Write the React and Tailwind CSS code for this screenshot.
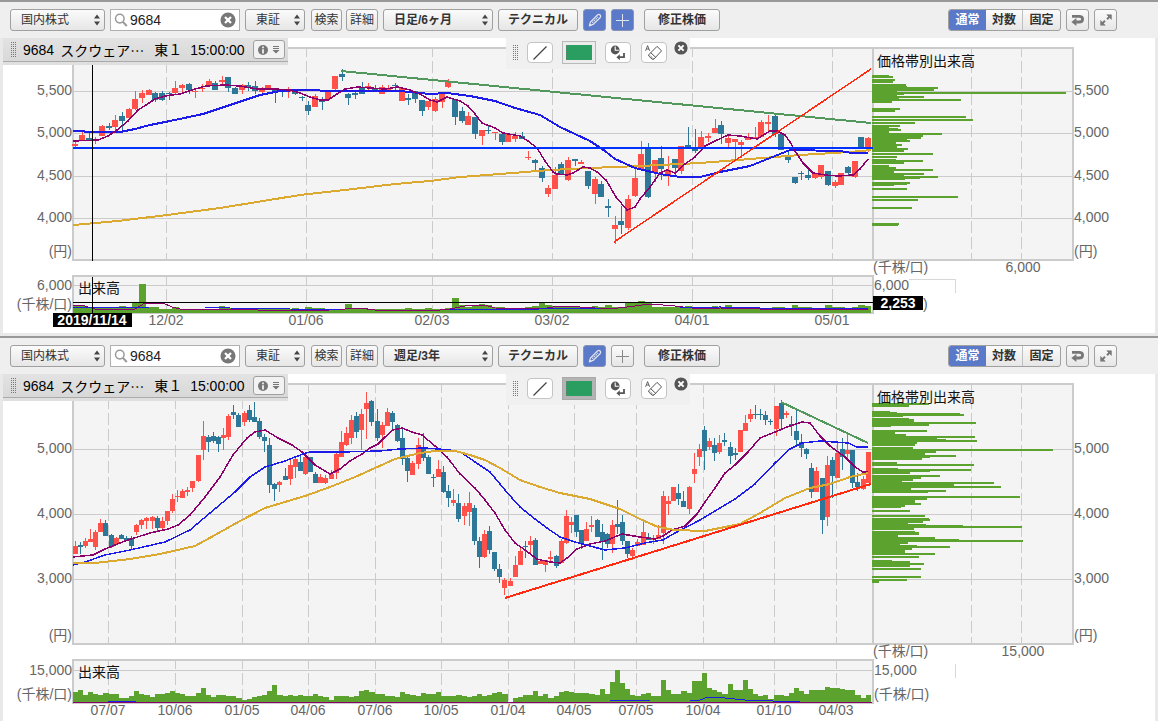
import React from "react";

// Each candle: direction (R rising / B falling), high, body top, body bottom, low.
const DAILY = `R 141 144 146 147|R 132 135 141 141|B 133 138 141 141|R 137 140 141 144|R 125 126 136 136|B 123 126 128 130|R 115 120 127 130|B 112 116 121 131|R 108 109 118 118|R 91 99 109 110|R 90 93 98 103|R 89 90 95 95|B 92 93 100 102|B 91 93 100 101|B 92 93 94 100|R 81 88 93 94|R 84 85 88 93|B 83 84 90 94|R 88 91 92 98|R 84 88 89 92|R 79 81 86 86|B 81 83 90 90|R 76 80 82 85|B 77 77 88 92|B 87 88 94 94|R 84 85 90 94|B 82 85 87 91|B 81 86 91 94|R 87 89 92 94|R 85 85 88 88|B 90 90 93 103|B 90 91 92 97|R 87 89 92 98|B 90 90 94 95|B 96 97 98 101|B 101 105 111 115|R 94 96 107 107|B 97 100 102 110|R 91 91 99 99|R 76 76 89 92|B 69 74 77 81|B 93 94 98 105|B 91 93 95 99|B 82 88 94 94|R 83 86 87 91|B 85 88 92 92|R 85 87 94 94|R 85 88 92 92|B 83 85 86 90|R 88 88 101 101|B 94 98 100 105|B 91 91 99 103|B 100 100 111 116|R 101 101 107 110|R 97 99 111 112|R 92 92 102 108|R 79 82 87 88|B 99 99 117 125|B 107 111 121 123|R 112 116 125 125|B 117 117 134 139|R 130 130 136 145|B 126 130 131 134|R 132 132 133 140|B 134 134 142 145|R 134 134 142 142|R 132 136 139 142|B 132 136 139 139|R 151 157 158 160|B 159 160 163 171|B 166 168 178 182|R 185 188 194 197|R 167 175 189 189|B 162 164 175 175|R 157 160 180 181|B 159 159 161 166|R 160 162 164 164|B 171 171 186 189|R 177 179 194 204|B 181 184 197 197|B 199 206 208 217|R 216 225 229 244|B 206 221 225 234|R 195 199 228 230|R 167 178 196 197|R 141 154 169 169|B 143 148 197 198|R 160 160 172 182|B 146 158 169 180|R 156 170 175 186|B 159 159 168 175|R 146 146 171 174|B 127 145 148 148|B 129 147 151 153|R 131 137 149 149|R 133 136 138 142|R 119 128 133 133|B 121 125 134 144|R 135 138 143 148|R 139 139 142 159|R 140 142 145 158|R 133 138 140 140|R 127 137 139 139|R 120 122 137 137|R 115 122 124 131|B 115 116 134 137|B 134 134 150 150|B 151 155 160 163|B 177 177 183 184|B 171 173 174 180|B 170 175 178 180|R 173 174 178 179|R 165 165 177 179|B 171 171 185 186|R 180 182 186 188|R 173 173 185 185|B 166 167 173 176|R 161 161 177 178|B 137 137 148 148|R 137 138 148 152`;

const WEEKLY = `R 541 546 554 554|B 542 545 547 554|R 538 541 546 548|R 529 539 542 542|R 530 532 547 550|R 519 523 532 532|B 520 523 536 536|B 534 535 547 548|R 537 538 544 544|B 534 535 539 539|B 536 538 541 541|B 536 538 546 549|R 524 525 532 535|R 519 520 525 529|R 517 518 521 529|R 516 517 521 529|B 516 518 528 531|R 517 521 528 530|R 511 511 521 525|R 494 499 511 513|R 490 496 497 502|R 489 491 498 498|R 487 490 492 496|R 481 481 488 492|R 455 455 481 482|R 421 436 450 460|B 435 437 442 452|B 432 436 441 443|B 436 437 444 452|R 428 435 438 450|R 414 416 437 440|B 405 412 415 419|B 413 415 427 427|R 411 413 422 426|B 405 410 420 422|B 402 417 422 422|B 418 421 437 439|B 434 437 441 452|B 438 445 485 493|B 483 484 489 501|R 481 482 485 492|B 468 476 480 480|R 460 465 479 485|R 457 459 467 478|B 456 462 471 471|R 456 457 474 475|B 457 457 472 472|B 472 474 483 483|R 474 477 483 483|R 475 478 483 484|R 470 474 479 479|R 452 454 473 479|R 431 442 457 457|R 427 433 445 446|R 415 420 438 444|B 412 416 432 438|R 409 414 430 450|R 392 403 409 439|B 400 401 422 426|B 409 421 438 441|R 422 425 435 448|R 408 412 426 426|B 411 413 422 429|B 424 425 441 442|B 429 438 459 465|B 457 458 471 482|R 461 463 475 475|R 438 445 464 469|B 433 448 458 461|B 455 457 474 474|B 474 477 478 487|R 460 469 477 477|B 466 472 492 493|B 485 491 498 507|R 489 500 503 506|B 494 503 519 522|R 503 506 516 525|R 492 503 512 526|B 505 508 541 545|B 537 541 557 568|R 530 534 557 558|B 526 531 550 554|B 552 552 569 571|B 564 569 577 583|R 578 580 588 595|R 578 581 586 586|R 556 565 577 577|R 548 551 565 565|B 541 546 547 558|R 536 541 545 554|B 538 540 565 565|R 559 561 564 564|R 560 560 565 572|R 551 557 559 563|B 555 556 566 568|R 539 541 563 563|R 510 516 543 544|R 517 522 525 533|B 515 515 532 537|B 530 530 543 549|R 522 529 541 541|R 516 525 527 532|B 519 520 537 537|B 524 532 542 560|B 533 534 544 548|R 520 525 544 553|B 500 524 527 534|B 515 522 541 545|B 541 541 554 558|R 548 550 556 560|R 539 542 546 546|R 522 532 545 545|B 533 537 540 540|R 535 538 540 544|R 525 535 539 539|R 491 496 533 544|R 496 501 504 515|R 487 487 501 501|B 484 493 499 505|B 491 501 507 507|R 486 487 509 514|R 453 469 474 483|R 444 449 457 466|B 426 430 451 470|R 438 441 447 450|B 438 445 453 461|R 435 443 452 454|B 433 440 442 446|B 442 447 456 464|B 448 453 455 460|R 430 430 452 452|R 415 423 431 431|R 409 414 419 422|B 405 414 415 419|B 409 414 415 420|B 411 415 420 425|B 419 421 422 425|R 406 406 429 436|B 400 403 419 428|R 411 413 415 418|B 416 424 426 436|B 410 431 440 445|B 434 442 448 457|B 448 449 454 459|B 463 468 492 498|R 467 471 492 492|B 478 478 520 534|R 456 465 517 526|B 457 460 476 498|R 443 453 478 478|B 438 449 457 470|R 434 450 454 459|B 450 450 483 488|B 473 482 487 491|R 476 479 489 490|R 452 452 483 483`;

const parseCandles = (text) =>
  text.split("|").map((row) => {
    const [dir, high, top, bottom, low] = row.split(" ");
    return { up: dir === "R", high: +high, top: +top, bottom: +bottom, low: +low };
  });

// Volume by price: top, height, length.
const DAILY_PROFILE = [
  [75, 1, 17], [76, 2, 21], [79, 2, 23], [81, 2, 21], [84, 2, 34], [86, 1, 35], [87, 2, 66], [89, 2, 62], [91, 1, 25],
  [92, 2, 194], [94, 1, 32], [95, 1, 25], [96, 2, 52], [98, 1, 27], [99, 2, 89], [101, 2, 20], [108, 2, 28], [110, 2, 23],
  [116, 2, 94], [119, 2, 101], [122, 2, 43], [125, 2, 28], [127, 1, 17], [128, 1, 26], [129, 2, 29], [131, 2, 17],
  [133, 2, 70], [135, 2, 51], [137, 2, 49], [139, 1, 35], [140, 2, 38], [142, 2, 24], [144, 2, 30], [146, 2, 25],
  [148, 2, 36], [150, 2, 32], [153, 2, 61], [156, 2, 25], [159, 1, 24], [160, 2, 51], [162, 2, 32], [165, 2, 17],
  [167, 2, 24], [169, 2, 61], [171, 2, 22], [173, 2, 52], [175, 1, 32], [176, 2, 66], [178, 1, 48], [179, 1, 33],
  [182, 2, 38], [184, 1, 35], [185, 1, 22], [188, 2, 35], [196, 2, 86], [199, 2, 46], [207, 2, 40], [223, 2, 27], [225, 1, 26],
];
const WEEKLY_PROFILE = [
  [403, 2, 57], [405, 2, 37], [411, 1, 18], [412, 1, 25], [413, 1, 88], [414, 2, 92], [416, 1, 31], [418, 1, 37],
  [419, 3, 42], [422, 2, 104], [424, 2, 57], [426, 1, 19], [430, 2, 55], [432, 2, 23], [434, 2, 34], [436, 2, 103],
  [438, 1, 65], [439, 1, 74], [440, 2, 105], [442, 2, 45], [444, 2, 43], [447, 2, 41], [449, 2, 181], [451, 2, 64],
  [453, 2, 53], [455, 2, 84], [457, 1, 58], [458, 2, 50], [462, 2, 25], [464, 2, 102], [468, 1, 26], [469, 2, 99],
  [471, 1, 58], [472, 2, 38], [475, 2, 68], [477, 2, 49], [479, 2, 41], [481, 1, 30], [482, 2, 122], [484, 2, 82],
  [486, 2, 129], [488, 2, 39], [490, 2, 74], [492, 1, 56], [496, 2, 148], [498, 2, 55], [500, 3, 43], [503, 2, 49],
  [505, 2, 33], [507, 1, 29], [510, 2, 38], [515, 2, 53], [518, 1, 57], [519, 2, 58], [521, 2, 51], [523, 1, 36],
  [524, 1, 54], [525, 1, 91], [526, 2, 150], [528, 2, 42], [531, 1, 43], [532, 3, 47], [535, 2, 26], [537, 2, 63],
  [539, 1, 87], [540, 2, 151], [542, 2, 36], [544, 1, 28], [545, 1, 45], [546, 2, 78], [548, 2, 40], [550, 3, 33],
  [553, 2, 63], [556, 2, 47], [560, 1, 20], [561, 2, 38], [563, 2, 52], [565, 2, 38], [568, 2, 49], [576, 2, 49],
  [579, 2, 35], [581, 2, 7],
];

const DAILY_VOLUME = [
  6, 6, 5, 4, 4, 4, 5, 6, 4, 9, 28, 5, 5, 3, 3, 5, 3, 3, 3, 3, 3, 3, 6, 4, 3, 4, 4, 3, 3, 3, 3, 3, 3, 4, 3, 5, 4, 4, 3, 3,
  3, 8, 4, 3, 3, 3, 3, 3, 3, 3, 4, 3, 3, 4, 3, 3, 4, 14, 7, 5, 6, 8, 7, 5, 5, 3, 3, 3, 5, 6, 9, 7, 6, 6, 6, 6, 5, 5, 6, 5,
  7, 5, 5, 9, 9, 11, 9, 5, 5, 5, 5, 5, 6, 5, 5, 5, 6, 5, 7, 5, 5, 5, 5, 4, 4, 5, 5, 4, 7, 5, 5, 4, 4, 7, 5, 5, 4, 5, 7, 6,
];
const WEEKLY_VOLUME = [
  10, 12, 7, 10, 8, 7, 9, 8, 8, 4, 4, 6, 11, 8, 7, 5, 8, 8, 9, 11, 9, 8, 6, 6, 9, 14, 7, 5, 7, 7, 6, 6, 4, 2, 3, 5, 6, 7, 11,
  17, 7, 6, 7, 6, 7, 6, 6, 8, 6, 5, 2, 6, 6, 6, 5, 6, 11, 12, 10, 8, 8, 6, 6, 5, 10, 8, 7, 6, 9, 8, 8, 10, 6, 6, 6, 7, 6, 5,
  6, 8, 6, 7, 9, 10, 8, 0, 4, 5, 7, 7, 11, 6, 8, 4, 6, 10, 11, 10, 9, 9, 9, 8, 7, 13, 8, 20, 32, 19, 13, 7, 6, 8, 9, 6, 6,
  22, 12, 8, 8, 11, 9, 21, 21, 29, 14, 12, 10, 8, 18, 12, 12, 22, 13, 8, 6, 7, 3, 7, 7, 6, 9, 14, 11, 8, 12, 12, 12, 15, 14,
  14, 13, 12, 12, 7, 4, 7,
];

const dailyChart = {
  title: "日足チャート",
  viewBox: "3 38 1152 295",
  top: 48,
  bottom: 260,
  volTop: 276,
  volBottom: 313,
  candles: parseCandles(DAILY),
  start: 75.8,
  step: 6.66,
  bodyWidth: 6,
  bodyOffset: 3,
  volume: DAILY_VOLUME,
  profile: DAILY_PROFILE,
  prices: [[91, "5,500"], [133, "5,000"], [176, "4,500"], [218, "4,000"]],
  dates: [[166, "12/02"], [306, "01/06"], [432, "02/03"], [552, "03/02"], [692, "04/01"], [832, "05/01"]],
  volLabel: "6,000",
  volGrid: 285,
  dateBaseline: 325,
  unitBaseline: 309,
  lines: [
    ["#dba830", 2, "73,225 118,221 167,215 220,208 300,195 345,190 395,184 430,181 460,177 500,174 550,170 590,168 640,166 700,163 750,159 800,155 850,152 871,150"],
    ["#1c1ce6", 2, "73,131 83,131 86,132 120,132 135,129 150,125 170,121 203,114 230,105 260,95 280,91 300,90 340,91 400,91 430,94 447,93 470,96 495,101 515,108 540,115 560,127 575,134 590,141 605,151 615,159 635,168 660,174 680,177 700,177 720,172 750,166 765,160 780,154 790,150 840,151 852,153 868,153"],
    ["#8b006b", 1.5, "73,141 98,140 108,136 117,130 128,121 138,110 146,105 155,99 165,96 180,94 195,89 206,86 225,85 240,86 257,89 275,89 290,90 300,93 310,97 320,100 328,100 337,94 345,89 358,87 370,88 385,89 398,87 410,90 420,94 430,100 437,102 447,97 460,101 468,106 475,114 482,123 495,128 503,133 520,136 528,141 537,148 545,161 553,172 557,174 567,175 573,173 583,167 590,168 597,172 606,180 616,197 627,210 635,207 640,199 650,187 660,173 667,170 675,173 685,164 695,157 705,146 715,141 728,135 740,136 757,139 770,131 777,131 785,135 790,142 795,151 803,163 813,173 825,175 838,176 853,175 860,169 868,159"],
    ["#0032ff", 2, "73,148 873,148"],
    ["#52985c", 2, "341,71 871,123"],
    ["#ff2a10", 1.5, "614,242 871,69"],
  ],
  volLines: [
    ["#8b006b", "73,305 85,306 95,309 135,309 145,303 163,303 172,307 180,309 225,309 290,311 330,310 360,308 375,310 440,310 450,309 465,306 485,305 495,308 540,309 560,306 580,307 610,309 635,306 650,304 675,306 700,309 720,308 760,309 868,309"],
    ["#1c1ce6", "73,307 95,308 150,307 205,307 230,308 290,309 340,310 450,310 540,309 600,308 680,308 720,307 760,308 868,308"],
  ],
  cursor: true,
};

const weeklyChart = {
  title: "週足チャート",
  viewBox: "3 374 1152 347",
  top: 384,
  bottom: 644,
  volTop: 660,
  volBottom: 703,
  candles: parseCandles(WEEKLY),
  start: 75.3,
  step: 5.115,
  bodyWidth: 5,
  bodyOffset: 2,
  volume: WEEKLY_VOLUME,
  profile: WEEKLY_PROFILE,
  prices: [[449, "5,000"], [514, "4,000"], [579, "3,000"]],
  dates: [
    [108, "07/07"], [175, "10/06"], [242, "01/05"], [308, "04/06"], [375, "07/06"], [441, "10/05"],
    [508, "01/04"], [574, "04/05"], [636, "07/05"], [703, "10/04"], [774, "01/10"], [836, "04/03"],
  ],
  volLabel: "15,000",
  volGrid: 670,
  dateBaseline: 715,
  unitBaseline: 699,
  lines: [
    ["#8b006b", 1.5, "73,557 93,555 105,549 125,541 150,533 168,529 178,525 190,515 205,497 220,477 233,455 247,438 255,432 265,430 278,438 292,445 302,452 315,465 330,474 340,469 350,461 362,454 370,448 378,444 385,437 393,430 402,428 412,432 422,435 435,446 447,457 460,474 475,488 485,500 495,513 505,530 515,543 525,550 537,559 550,562 560,563 567,558 577,549 590,544 605,541 622,534 640,537 655,539 663,536 672,530 685,526 697,514 705,502 715,488 725,473 735,465 748,452 760,438 775,432 787,427 802,422 810,423 820,436 830,446 845,457 855,467 863,472 868,472"],
    ["#1c1ce6", 1.5, "73,565 85,562 105,555 130,550 165,542 190,530 210,513 235,492 250,477 265,467 285,461 303,454 310,452 340,452 380,451 400,449 425,448 450,450 462,453 475,462 490,472 505,490 520,507 535,519 547,528 560,537 575,542 590,546 605,550 625,548 645,543 663,540 675,533 700,520 735,499 755,484 775,463 790,449 802,443 820,441 848,443 857,447 868,447"],
    ["#dba830", 2, "73,563 95,563 130,559 160,554 195,546 215,535 240,521 265,508 285,502 305,496 330,487 355,477 375,468 395,459 420,453 435,451 455,451 470,455 485,460 500,468 520,480 540,487 560,493 590,499 605,504 620,509 640,519 658,527 675,530 705,531 740,524 760,513 785,498 810,488 830,484 850,477 868,473"],
    ["#ff2a10", 2, "505,598 871,484"],
    ["#52985c", 2, "781,402 868,443"],
  ],
  volLines: [
    ["#8b006b", "73,702 872,702"],
    ["#1c1ce6", "108,701 136,701"],
    ["#1c1ce6", "610,701 632,700 650,701"],
    ["#1c1ce6", "690,701 700,700 708,697 725,698 745,700 773,701 800,701"],
  ],
  cursor: false,
};

const FRAME = "#cbcbcb";

function VerticalGrid({ x, y1, y2 }) {
  return <line x1={x + 0.5} x2={x + 0.5} y1={y1} y2={y2} stroke={FRAME} strokeDasharray="12 4" strokeDashoffset="3" />;
}

function StockChart({ data }) {
  const profileUnitBaseline = data.bottom + 12;
  return (
    <svg viewBox={data.viewBox} className="block h-auto w-full bg-white" role="img" aria-label={data.title}>
      <g shapeRendering="crispEdges" fill="none">
        <rect x="73" y={data.top} width="1000" height={data.bottom - data.top} fill="#f4f4f4" />
        <rect x="73" y={data.volTop} width="800" height={data.volBottom - data.volTop} fill="#f4f4f4" />
        {data.prices.map(([y]) => (
          <line key={y} x1="73" x2="1072" y1={y + 0.5} y2={y + 0.5} stroke={FRAME} />
        ))}
        <line x1="73" x2="873" y1={data.volGrid + 0.5} y2={data.volGrid + 0.5} stroke={FRAME} />
        {data.dates.map(([x]) => (
          <g key={x}>
            <VerticalGrid x={x} y1={data.top} y2={data.bottom} />
            <VerticalGrid x={x} y1={data.volTop} y2={data.volBottom} />
          </g>
        ))}
        <VerticalGrid x={971} y1={data.top} y2={data.bottom} />
        <VerticalGrid x={1021} y1={data.top} y2={data.bottom} />
        <rect x="73" y={data.top} width="1000" height={data.bottom - data.top} stroke={FRAME} strokeWidth="2" />
        <rect x="73" y={data.volTop} width="800" height={data.volBottom - data.volTop} stroke={FRAME} strokeWidth="2" />
        <line x1="873" x2="873" y1={data.top} y2={data.bottom} stroke={FRAME} strokeWidth="2" />

        {data.candles.map((c, i) => {
          const x = Math.floor(data.start + data.step * i);
          return (
            <g key={i} fill={c.up ? "#ff5049" : "#2d7898"}>
              <rect x={x} y={c.high} width="1" height={c.low - c.high} />
              <rect x={x - data.bodyOffset} y={c.top} width={data.bodyWidth} height={c.bottom - c.top} />
            </g>
          );
        })}
        {data.volume.map((h, i) => {
          const x = Math.floor(data.start + data.step * i) - data.bodyOffset;
          const next = Math.floor(data.start + data.step * (i + 1)) - data.bodyOffset;
          const left = Math.max(x, 73);
          return <rect key={i} x={left} y={data.volBottom - h - 1} width={Math.min(next, 871) - left} height={h + 1} fill="#5ca22e" />;
        })}
        {data.profile.map(([y, h, w]) => (
          <rect key={y} x="872" y={y} width={w} height={h} fill="#5ca22e" />
        ))}
        {data.lines.map(([color, width, points], i) => (
          <polyline key={i} points={points} stroke={color} strokeWidth={width} />
        ))}
        {data.volLines.map(([color, points], i) => (
          <polyline key={i} points={points} stroke={color} strokeWidth="1" />
        ))}
        {data.cursor ? (
          <polyline points="909,279.5 955.5,279.5 955.5,293" stroke="#d8d8d8" />
        ) : (
          <line x1="955.5" x2="955.5" y1="664" y2="678" stroke="#d8d8d8" />
        )}
        {data.cursor && (
          <g stroke="#000">
            <line x1="92.5" x2="92.5" y1={data.top} y2={data.bottom + 1} />
            <line x1="92.5" x2="92.5" y1={data.volTop + 1} y2={data.volBottom} />
            <line x1="73" x2="873" y1="302.5" y2="302.5" />
          </g>
        )}
      </g>

      <g fill="#666" fontSize="14">
        {data.prices.map(([y, label]) => (
          <g key={label}>
            <text x="72" y={y + 4} textAnchor="end">{label}</text>
            <text x="1074" y={y + 4}>{label}</text>
          </g>
        ))}
        <text x="72" y={data.bottom - 4} textAnchor="end">(円)</text>
        <text x="1074" y={data.bottom - 4}>(円)</text>
        <text x="72" y={data.volGrid + 5} textAnchor="end">{data.volLabel}</text>
        <text x="874" y={data.volGrid + 5}>{data.volLabel}</text>
        <text x="72" y={data.unitBaseline} textAnchor="end">(千株/口)</text>
        {data.cursor ? (
          <text x="923" y={data.unitBaseline}>)</text>
        ) : (
          <text x="874" y={data.unitBaseline}>(千株/口)</text>
        )}
        <text x="873" y={profileUnitBaseline}>(千株/口)</text>
        <text x="1023" y={profileUnitBaseline} textAnchor="middle">{data.volLabel}</text>
        {data.dates.map(([x, label]) => (
          <text key={x} x={x} y={data.dateBaseline} textAnchor="middle">{label}</text>
        ))}
      </g>
      <g fill="#111" fontSize="14">
        <text x="877" y={data.top + 18}>価格帯別出来高</text>
        <text x="78" y={data.volTop + 17}>出来高</text>
      </g>
      {data.cursor && (
        <g fontSize="14" fontWeight="bold" textAnchor="middle">
          <rect x="53" y="313" width="79" height="14" />
          <text x="92" y="325" fill="#fff">2019/11/14</text>
          <rect x="873" y="296" width="50" height="14" />
          <text x="898" y="308" fill="#fff">2,253</text>
        </g>
      )}
    </svg>
  );
}

const control = "h-[22px] rounded-[3px] border border-[#a0a0a0] bg-linear-to-b from-[#fbfbfb] to-[#e6e6e6] text-[12px] leading-5 text-[#333]";

function Picker({ label, value, className, bold }) {
  return (
    <label className={`relative block ${className}`}>
      <span className="sr-only">{label}</span>
      <select
        defaultValue={value}
        className={`${control} block w-full appearance-none pl-[10px] ${bold ? "font-bold" : ""}`}
      >
        <option>{value}</option>
      </select>
      <svg viewBox="0 0 8 12" className="pointer-events-none absolute top-[5px] right-1 h-3 w-2" fill="#444">
        <path d="M4 0.5 7 4.5H1zM4 11.5 7 7.5H1z" />
      </svg>
    </label>
  );
}

function PencilIcon() {
  return (
    <svg viewBox="0 0 14 14" className="size-3.5" fill="none" stroke="#dfe3ee" strokeWidth="1.2">
      <path d="M1.5 12.5 2.4 9 9.4 2Q11 .8 12.1 2T12 4.8L5.2 11.4z" />
      <path d="M4.2 9.8 10 3.9" strokeDasharray="1.6 .8" />
      <path d="m1.5 12.5 1.8-.6" strokeWidth="2" />
    </svg>
  );
}

function CrossIcon({ active }) {
  return (
    <svg viewBox="0 0 13 13" className="size-[13px]" stroke={active ? "#dfe3ee" : "#888"} shapeRendering="crispEdges">
      <path d="M6.5 0v13M0 6.5h13" />
    </svg>
  );
}

function UndoIcon() {
  return (
    <svg viewBox="0 0 15 14" className="h-3.5 w-[15px]" fill="none" stroke="#777" strokeWidth="2.8">
      <path d="M2 3.4H9Q12.6 3.4 12.6 6.2T9 9H5" />
      <path d="M6.4 5V13L1.4 9z" fill="#777" stroke="none" />
    </svg>
  );
}

function ExpandIcon() {
  return (
    <svg viewBox="0 0 14 14" className="size-3.5" fill="#777" stroke="#777" strokeWidth="2">
      <path d="M7.8 1.8h4.6v4.6z" strokeWidth=".6" />
      <path d="M11 3.2 8 6.2" />
      <path d="M1.6 7.6v4.6h4.6z" strokeWidth=".6" />
      <path d="m3 10.8 3-3" />
    </svg>
  );
}

function CloseCircle({ className, fill }) {
  return (
    <svg viewBox="0 0 14 14" className={className}>
      <circle cx="7" cy="7" r="6.6" fill={fill} />
      <path d="m4.4 4.4 5.2 5.2m0-5.2L4.4 9.6" stroke="#fff" strokeWidth="2" />
    </svg>
  );
}

function Grip() {
  return (
    <svg viewBox="0 0 6 15" className="h-[15px] w-1.5 shrink-0" stroke="#777" strokeWidth="1" strokeDasharray="1 1" shapeRendering="crispEdges">
      <path d="M.5 0v15M2.5 0v15M4.5 0v15" />
    </svg>
  );
}

function Toolbar({ period, crossActive }) {
  const square = "flex w-[23px] items-center justify-center";
  const blue = "h-[22px] rounded-[3px] border border-[#8792b4] bg-[#5a79c8]";
  return (
    <div className="flex items-center bg-[#efefef] py-[7px] pr-[41px] pl-[10px]">
      <div className="flex items-center gap-[5px]">
        <Picker label="市場区分" value="国内株式" className="w-[95px]" />
        <label className="flex h-[22px] w-[130px] items-center border border-[#b0b0b0] bg-white px-[3px]">
          <span className="sr-only">銘柄コード</span>
          <svg viewBox="0 0 14 14" className="size-3.5 shrink-0" fill="none" stroke="#999" strokeWidth="1.5">
            <circle cx="5.8" cy="5.6" r="4.3" />
            <path d="m9 9 3.8 4" strokeWidth="2" />
          </svg>
          <input defaultValue="9684" className="ml-0.5 block h-5 w-full min-w-0 text-[14px] leading-5 text-[#222] outline-none" />
          <button type="button" aria-label="クリア" className="shrink-0">
            <CloseCircle className="size-4" fill="#777" />
          </button>
        </label>
        <Picker label="取引所" value="東証" className="w-[60px]" />
      </div>
      <div className="ml-1.5 flex gap-1">
        <button type="button" className={`${control} w-[31px] whitespace-nowrap`}>検索</button>
        <button type="button" className={`${control} w-[32px] whitespace-nowrap`}>詳細</button>
      </div>
      <div className="ml-[5px] flex gap-[5px]">
        <Picker label="足種" value={period} className="w-[110px]" bold />
        <button type="button" className={`${control} w-20 font-bold whitespace-nowrap`}>テクニカル</button>
        <button type="button" aria-label="描画" className={`${square} ${blue}`}>
          <PencilIcon />
        </button>
        <button type="button" aria-label="十字線" className={`${square} ${crossActive ? blue : control}`}>
          <CrossIcon active={crossActive} />
        </button>
      </div>
      <button type="button" className={`${control} ml-2.5 w-[76px] font-bold whitespace-nowrap`}>修正株価</button>
      <div className="ml-auto flex gap-[5px]">
        <div className="flex h-[22px] overflow-hidden rounded-[3px] border border-[#a0a0a0] bg-linear-to-b from-[#fbfbfb] to-[#e6e6e6] text-[12px] leading-5 font-bold whitespace-nowrap text-[#333]">
          <button type="button" className="w-[37px] bg-[#5a79c8] text-white">通常</button>
          <button type="button" className="w-[37px] border-r border-[#c0c0c0]">対数</button>
          <button type="button" className="w-[37px]">固定</button>
        </div>
        <button type="button" aria-label="元に戻す" className={`${control} ${square}`}><UndoIcon /></button>
        <button type="button" aria-label="拡大" className={`${control} ${square}`}><ExpandIcon /></button>
      </div>
    </div>
  );
}

function InfoBar() {
  return (
    <div className="absolute top-0 left-0 w-[285px] bg-[#dfdfdf] pb-[3px]">
      <div className="flex h-6 items-center border-b border-[#aaa] bg-linear-to-b from-[#e3e3e3] to-[#d8d8d8] pr-[3px] pl-2 text-[14px] leading-5 whitespace-nowrap text-black">
        <Grip />
        <span className="ml-1.5">9684</span>
        <span className="ml-1.5 font-['Noto_Sans_CJK_JP',sans-serif]">スクウェア…</span>
        <span className="ml-2.5">東１</span>
        <span className="ml-2">15:00:00</span>
        <button type="button" aria-label="銘柄情報" className="ml-auto flex h-[19px] w-8 items-center justify-center gap-1 rounded-[3px] border border-[#a0a0a0] bg-[#f2f2f2]">
          <svg viewBox="0 0 10 10" className="size-2.5">
            <circle cx="5" cy="5" r="5" fill="#777" />
            <path d="M5 1.6v1.6M5 4.2v4.2" stroke="#fff" strokeWidth="1.6" />
          </svg>
          <svg viewBox="0 0 8 8" className="size-2" fill="#777">
            <path d="M1 0h6v1H1zM1 2h6v1H1zM.5 4h7L4 7.5z" />
          </svg>
        </button>
      </div>
    </div>
  );
}

function DrawBar({ swatchPressed }) {
  const tool = "flex h-[21px] w-[26px] items-center justify-center rounded-[4px] border border-[#c4c4c4] bg-white";
  return (
    <div className="absolute top-0 left-[503px] flex h-[31px] w-[184px] items-start bg-[#f0f0f0] pl-[7px]">
      <div className="pt-[7px]"><Grip /></div>
      <div className="ml-2 flex h-[29px] items-center">
        <button type="button" aria-label="直線" className={tool}>
          <svg viewBox="0 0 16 16" className="size-4" stroke="#444" strokeWidth="1.3"><path d="M1.5 14.5 14.5 1.5" /></svg>
        </button>
        <button
          type="button"
          aria-label="線の色"
          className={`ml-[9px] flex h-[23px] w-[34px] items-center justify-center border ${swatchPressed ? "border-[#aaa] bg-[#b4b4b4]" : "border-[#b8b8b8] bg-[#ececec]"}`}
        >
          <span className="h-[15px] w-[26px] border border-dotted border-[#777] bg-[#2a9d60]" />
        </button>
        <button type="button" aria-label="描画を戻す" className={`${tool} ml-[9px]`}>
          <svg viewBox="0 0 16 16" className="size-4" fill="none">
            <circle cx="5.2" cy="5" r="4.4" fill="#555" />
            <path d="M5.2 1.6v3.6h3.6" stroke="#fff" strokeWidth="1.1" />
            <path d="M14 8v4.2H9" stroke="#555" strokeWidth="1.8" />
            <path d="M9.8 9.2v6L6.4 12.2z" fill="#555" />
          </svg>
        </button>
        <button type="button" aria-label="すべて消去" className={`${tool} ml-2.5`}>
          <svg viewBox="0 0 18 16" className="h-4 w-[18px] shrink-0" fill="none" stroke="#555">
            <path d="M.6 5.8 2.6.6l2 5.2M1.3 4h2.7" strokeWidth=".9" />
            <path d="M4 9.5 12 1.4l4.6 4.4-7.6 8.2q-1 .8-2 0L3.7 11q-.5-.8.3-1.5z" />
            <path d="m5.8 7.8 5 4.6" />
            <path d="m4.6 10.3 4 3.4" strokeDasharray="1 1" />
          </svg>
        </button>
      </div>
      <button type="button" aria-label="閉じる" className="mt-[3px] ml-[7px]">
        <CloseCircle className="size-3.5" fill="#555" />
      </button>
    </div>
  );
}

function ChartPanel({ data, period, crossActive, swatchPressed, className }) {
  return (
    <section className={`border-t-2 border-[#999] bg-[#e9e9e9] ${className}`}>
      <Toolbar period={period} crossActive={crossActive} />
      <div className="relative mx-[3px]">
        <StockChart data={data} />
        <InfoBar />
        <DrawBar swatchPressed={swatchPressed} />
      </div>
    </section>
  );
}

export default function App() {
  return (
    <main className="min-h-screen bg-[#e9e9e9] font-['Liberation_Sans','Noto_Sans_CJK_JP',sans-serif]">
      <ChartPanel data={dailyChart} period="日足/6ヶ月" crossActive className="pb-[3px]" />
      <ChartPanel data={weeklyChart} period="週足/3年" swatchPressed className="" />
    </main>
  );
}
